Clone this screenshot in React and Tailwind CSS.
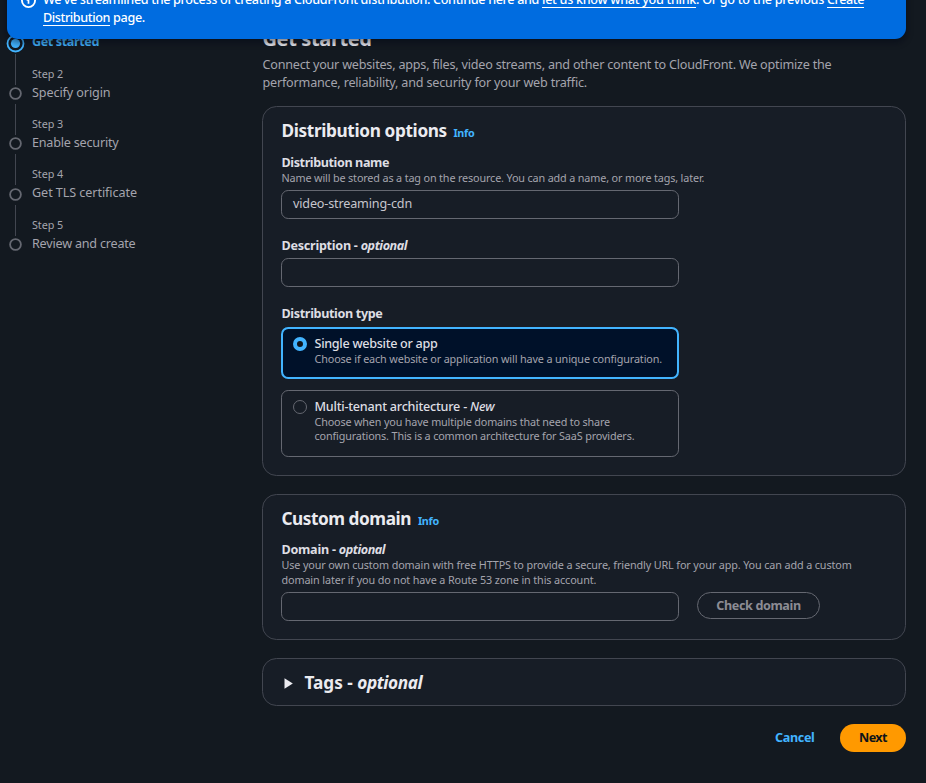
const LINK = "underline decoration-1 underline-offset-[3px]";

const STEPS = [
  { n: "", title: "Get started", active: true, tracking: "tracking-[-0.389px]" },
  { n: "Step 2", title: "Specify origin", tracking: "tracking-[-0.103px]" },
  { n: "Step 3", title: "Enable security", tracking: "tracking-[-0.207px]" },
  { n: "Step 4", title: "Get TLS certificate", tracking: "tracking-[-0.072px]" },
  { n: "Step 5", title: "Review and create", tracking: "tracking-[-0.209px]" },
];

function Banner() {
  return (
    <div className="absolute left-[7px] top-[-22px] z-10 flex h-[61px] w-[899px] rounded-[11px] bg-[#006ce0] pl-[14px] pt-[13px] text-[12.6px] leading-[18px] font-medium text-white shadow-[0_3px_6px_1px_rgba(0,7,22,0.45)]">
      <svg className="mt-[1.5px] h-[15px] w-[15px] shrink-0" viewBox="0 0 16 16" fill="none" stroke="currentColor" strokeWidth="2">
        <circle cx="8" cy="8" r="7" />
        <path d="M8 11.5V7.5H6M8 3.5v2" strokeWidth="1.8" />
      </svg>
      <div className="ml-[7px]">
        <p className="whitespace-pre">
          <span className="tracking-[-0.334px]">We've streamlined the process of creating a CloudFront distribution. Continue here and </span>
          <a className={`tracking-[-0.299px] ${LINK}`}>let us know what you think</a>
          <span className="tracking-[-0.286px]">. Or go to the previous </span>
          <a className={`tracking-[-0.427px] ${LINK}`}>Create</a>
        </p>
        <p className="whitespace-pre">
          <a className={`tracking-[-0.401px] ${LINK}`}>Distribution</a>
          <span className="tracking-[-0.292px]"> page.</span>
        </p>
      </div>
    </div>
  );
}

function Steps() {
  return (
    <ol className="flex w-[262px] shrink-0 flex-col pl-[8px] pt-[14.45px]">
      {STEPS.map((s, i) => (
        <li key={s.title} className="flex h-[50.3px]">
          <div className="flex w-[15px] shrink-0 flex-col items-center">
            <svg className="mt-[21.3px] h-[15px] w-[19px] shrink-0 overflow-visible" viewBox="0 0 19 15">
              {s.active ? (
                <>
                  <circle cx="9.5" cy="7.5" r="8" fill="none" stroke="#42b4ff" strokeWidth="1.8" />
                  <circle cx="9.5" cy="7.5" r="4.6" fill="#42b4ff" />
                </>
              ) : (
                <circle cx="9.5" cy="7.5" r="5.4" fill="none" stroke="#656871" strokeWidth="1.8" />
              )}
            </svg>
            {i < STEPS.length - 1 && <div className="-mb-[20px] mt-[3px] w-px flex-1 bg-[#424650]" />}
          </div>
          <div className="ml-[9px] whitespace-nowrap">
            <div className="h-[19px] text-[10.8px] leading-[18px] tracking-[-0.09px] text-[#a4a4ad]">{s.n}</div>
            <div className={`text-[12.6px] leading-[18px] ${s.tracking} ${s.active ? "font-bold text-[#42b4ff]" : "text-[#a4a4ad]"}`}>{s.title}</div>
          </div>
        </li>
      ))}
    </ol>
  );
}

const CARD = "rounded-[14.4px] border border-[#424650] bg-[#171d26]";
const LABEL = "h-[17px] pl-[0.5px] text-[12.6px] leading-[18px] font-bold text-[#dedee3] whitespace-pre";
const HINT = "pl-[0.5px] text-[10.8px] leading-[14.4px] text-[#a4a4ad] whitespace-nowrap";
const INPUT = "flex h-[29px] w-[398px] items-center rounded-[7.2px] border border-[#656871] bg-[#171d26]";
const H2 = "pl-[0.5px] text-[17.2px] leading-[22px] font-bold text-[#ebebf0] whitespace-pre";
const INFO = "text-[10.8px] font-bold tracking-[-0.289px] text-[#42b4ff]";
const OPTION = "h-[17px] pl-[0.5px] whitespace-pre text-[12.6px] leading-[18px] font-medium text-[#dedee3]";

export default function App() {
  return (
    <div className="relative h-[783px] w-[926px] overflow-hidden bg-[#131920] font-['Noto_Sans','Open_Sans',sans-serif]">
      <Banner />
      <div className="flex">
        <Steps />
        <main className="w-[644px] pt-[26px]">
          <h1 className="h-[30px] pl-[0.5px] text-[20px] leading-[26px] font-bold tracking-[-0.37px] text-[#ebebf0]">Get started</h1>
          <div className="h-[50px] whitespace-nowrap pl-[0.5px] text-[12.6px] leading-[18px] text-[#a4a4ad]">
            <p className="tracking-[-0.211px]">Connect your websites, apps, files, video streams, and other content to CloudFront. We optimize the</p>
            <p className="tracking-[-0.192px]">performance, reliability, and security for your web traffic.</p>
          </div>

          <section className={`${CARD} h-[370px] pl-[18px] pt-[13px]`}>
            <div className="flex items-baseline gap-[6.5px]">
              <h2 className={`${H2} tracking-[-0.35px]`}>Distribution options</h2>
              <a className={INFO}>Info</a>
            </div>
            <div className={`${LABEL} mt-[12px] tracking-[-0.406px]`}>Distribution name</div>
            <div className={`${HINT} tracking-[-0.142px]`}>Name will be stored as a tag on the resource. You can add a name, or more tags, later.</div>
            <div className={`${INPUT} mt-[4.6px] pb-[1px] pl-[11px] text-[12.6px] leading-[26px] tracking-[-0.16px] text-[#c6c6cd]`}>video-streaming-cdn</div>
            <div className={`${LABEL} mt-[18px]`}>
              <span className="tracking-[-0.26px]">Description - </span>
              <i className="tracking-[-0.438px]">optional</i>
            </div>
            <div className={`${INPUT} mt-[4px]`} />
            <div className={`${LABEL} mt-[18px] tracking-[-0.354px]`}>Distribution type</div>
            <div className="mt-[5px] flex h-[52px] w-[398px] rounded-[7.2px] border-2 border-[#42b4ff] bg-[#001129] pl-[10px] pt-[5px]">
              <div className="mt-[3px] h-[14px] w-[14px] shrink-0 rounded-full border-4 border-[#42b4ff] bg-[#0f141a]" />
              <div className="ml-[7px] pt-[1px]">
                <div className={`${OPTION} tracking-[-0.291px]`}>Single website or app</div>
                <div className={`${HINT} tracking-[-0.128px]`}>Choose if each website or application will have a unique configuration.</div>
              </div>
            </div>
            <div className="mt-[11px] flex h-[67px] w-[398px] rounded-[7.2px] border border-[#656871] pl-[11px] pt-[6px]">
              <div className="mt-[3px] h-[14px] w-[14px] shrink-0 rounded-full border border-[#656871]" />
              <div className="ml-[7px] pt-[1px]">
                <div className={OPTION}>
                  <span className="tracking-[-0.228px]">Multi-tenant architecture - </span>
                  <i>New</i>
                </div>
                <div className={`${HINT} tracking-[-0.159px]`}>Choose when you have multiple domains that need to share</div>
                <div className={`${HINT} tracking-[-0.14px]`}>configurations. This is a common architecture for SaaS providers.</div>
              </div>
            </div>
          </section>

          <section className={`${CARD} mt-[18px] h-[146px] pl-[18px] pt-[13px]`}>
            <div className="flex items-baseline gap-[7px]">
              <h2 className={`${H2} tracking-[-0.45px]`}>Custom domain</h2>
              <a className={INFO}>Info</a>
            </div>
            <div className={`${LABEL} mt-[11px]`}>
              <span className="tracking-[-0.25px]">Domain - </span>
              <i className="tracking-[-0.438px]">optional</i>
            </div>
            <div className={`${HINT} mt-[0.3px] tracking-[-0.12px]`}>Use your own custom domain with free HTTPS to provide a secure, friendly URL for your app. You can add a custom</div>
            <div className={`${HINT} mt-[0.4px] tracking-[-0.115px]`}>domain later if you do not have a Route 53 zone in this account.</div>
            <div className="mt-[4.5px] flex gap-[18px]">
              <div className={INPUT} />
              <button className="h-[27px] w-[123px] rounded-full border border-[#656871] text-center text-[12.6px] leading-[24px] font-bold tracking-[-0.374px] text-[#8c8c94]">Check domain</button>
            </div>
          </section>

          <section className={`${CARD} mt-[18px] flex h-[48px] items-center pl-[21px] pt-[2px]`}>
            <svg className="h-[11px] w-[9px]" viewBox="0 0 9 11">
              <path d="M0.5 0.3v10.4L8.8 5.5z" fill="#ebebf0" />
            </svg>
            <h2 className={`${H2} ml-[11px]`}>
              <span>Tags - </span>
              <i className="tracking-[-0.41px]">optional</i>
            </h2>
          </section>

          <div className="mt-[18px] flex h-[28px] items-center justify-end text-[12.6px] font-bold">
            <button className="pr-[25.5px] tracking-[-0.349px] text-[#42b4ff]">Cancel</button>
            <button className="h-[28px] w-[66px] rounded-full bg-[#ff9900] tracking-[-0.6px] text-[#0f141a]">Next</button>
          </div>
        </main>
      </div>
    </div>
  );
}
